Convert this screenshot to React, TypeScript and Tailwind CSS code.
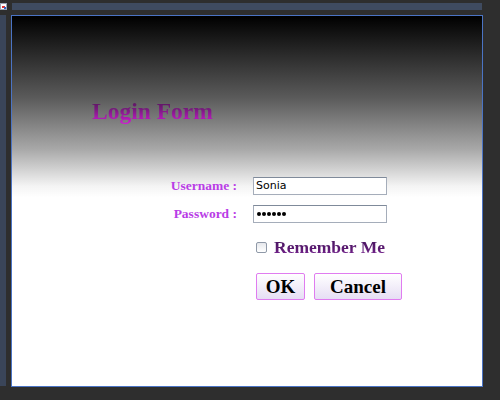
import React from 'react';

const serif = { fontFamily: '"Liberation Serif", "Times New Roman", serif' };

export default function App() {
  return (
    <div className="w-[500px] h-[400px] bg-[#2e2e2e] pt-[3px] overflow-hidden">
      {/* Top strip */}
      <div className="flex h-[7px]">
        <div className="w-[7px] h-[7px] bg-white border border-[#9aa4b4] relative overflow-hidden">
          <div className="absolute left-[1px] top-[2px] w-[3px] h-[2px] bg-[#e03030]" />
          <div className="absolute left-[3px] top-[3px] w-[3px] h-[2px] bg-[#3060c0]" />
        </div>
        <div className="ml-[5px] w-[470px] h-[7px] bg-[#3f4b60]" />
      </div>

      {/* Body */}
      <div className="flex mt-[5px]">
        <div className="w-[6px] h-[371px] bg-[#3a4559]" />
        <div className="ml-[5px] w-[472px] h-[372px] border border-[#4b74c4] bg-[linear-gradient(to_bottom,#000000_0%,#5a5a5a_22%,#a8a8a8_36%,#f4f4f4_46%,#ffffff_49%,#ffffff_100%)]">
          {/* Title */}
          <div className="pl-[80px] pt-[81px]">
            <span
              className="text-[23.5px] font-bold leading-[28px] bg-[linear-gradient(to_bottom,#4a1450_0%,#7a1a80_45%,#d21ad6_100%)] bg-clip-text text-transparent"
              style={serif}
            >
              Login Form
            </span>
          </div>

          {/* Form */}
          <div className="mt-[51px] flex flex-col gap-[8px]">
            <div className="flex items-center h-[20px]">
              <div className="w-[225px] text-right text-[13.5px] font-bold text-[#b93de6]" style={serif}>
                Username :
              </div>
              <div className="ml-[16px] w-[134px] h-[18px] border border-[#a5adba] border-t-[#7f8a9a] bg-white flex items-center px-[2px] text-[11px] text-black" style={{ fontFamily: '"DejaVu Sans", Tahoma, sans-serif' }}>
                Sonia
              </div>
            </div>
            <div className="flex items-center h-[20px]">
              <div className="w-[225px] text-right text-[13.5px] font-bold text-[#b93de6]" style={serif}>
                Password :
              </div>
              <div className="ml-[16px] w-[134px] h-[18px] border border-[#a5adba] border-t-[#7f8a9a] bg-white flex items-center gap-[1px] px-[3px]">
                {[0, 1, 2, 3, 4, 5].map((i) => (
                  <span key={i} className="w-[4px] h-[4px] rounded-full bg-black" />
                ))}
              </div>
            </div>
          </div>

          {/* Remember me */}
          <div className="mt-[12px] flex items-center pl-[244px]">
            <div className="w-[11px] h-[11px] border border-[#8f99a8] rounded-[2px] bg-[linear-gradient(to_bottom,#e6e8ec,#ffffff)]" />
            <span
              className="ml-[7px] text-[17.5px] font-bold leading-[22px] bg-[linear-gradient(to_bottom,#40145a_0%,#5c1a72_60%,#8a2aa8_100%)] bg-clip-text text-transparent"
              style={serif}
            >
              Remember Me
            </span>
          </div>

          {/* Buttons */}
          <div className="mt-[15px] flex pl-[244px] gap-[9px]">
            <button
              className="w-[49px] h-[27px] border border-[#e07cf0] rounded-[2px] bg-[linear-gradient(to_bottom,#ffffff,#e6def4)] text-[19px] font-bold text-black leading-none flex items-center justify-center"
              style={serif}
            >
              OK
            </button>
            <button
              className="w-[88px] h-[27px] border border-[#e07cf0] rounded-[2px] bg-[linear-gradient(to_bottom,#ffffff,#e6def4)] text-[19px] font-bold text-black leading-none flex items-center justify-center"
              style={serif}
            >
              Cancel
            </button>
          </div>
        </div>
      </div>
    </div>
  );
}
